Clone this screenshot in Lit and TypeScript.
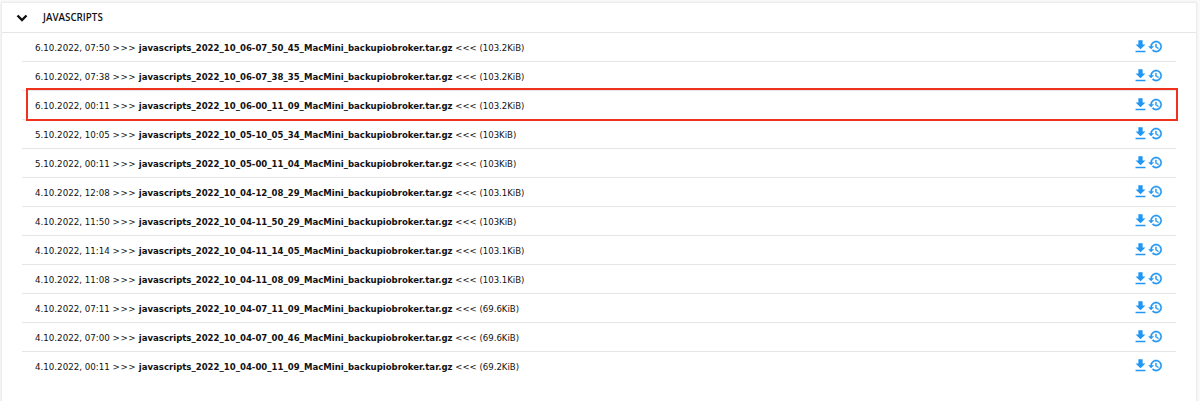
import { LitElement, html, css, svg } from "lit";
import { customElement } from "lit/decorators.js";

const rows: [string, string, string, boolean?][] = [
  ["6.10.2022, 07:50", "javascripts_2022_10_06-07_50_45_MacMini_backupiobroker.tar.gz", "103.2KiB"],
  ["6.10.2022, 07:38", "javascripts_2022_10_06-07_38_35_MacMini_backupiobroker.tar.gz", "103.2KiB"],
  ["6.10.2022, 00:11", "javascripts_2022_10_06-00_11_09_MacMini_backupiobroker.tar.gz", "103.2KiB", true],
  ["5.10.2022, 10:05", "javascripts_2022_10_05-10_05_34_MacMini_backupiobroker.tar.gz", "103KiB"],
  ["5.10.2022, 00:11", "javascripts_2022_10_05-00_11_04_MacMini_backupiobroker.tar.gz", "103KiB"],
  ["4.10.2022, 12:08", "javascripts_2022_10_04-12_08_29_MacMini_backupiobroker.tar.gz", "103.1KiB"],
  ["4.10.2022, 11:50", "javascripts_2022_10_04-11_50_29_MacMini_backupiobroker.tar.gz", "103KiB"],
  ["4.10.2022, 11:14", "javascripts_2022_10_04-11_14_05_MacMini_backupiobroker.tar.gz", "103.1KiB"],
  ["4.10.2022, 11:08", "javascripts_2022_10_04-11_08_09_MacMini_backupiobroker.tar.gz", "103.1KiB"],
  ["4.10.2022, 07:11", "javascripts_2022_10_04-07_11_09_MacMini_backupiobroker.tar.gz", "69.6KiB"],
  ["4.10.2022, 07:00", "javascripts_2022_10_04-07_00_46_MacMini_backupiobroker.tar.gz", "69.6KiB"],
  ["4.10.2022, 00:11", "javascripts_2022_10_04-00_11_09_MacMini_backupiobroker.tar.gz", "69.2KiB"],
];

const download = svg`<path d="M19 9h-4V3H9v6H5l7 7 7-7zM5 18v2h14v-2H5z"/>`;
const history = svg`<path d="M13 3c-4.970 0-9 4.030-9 9H1l3.890 3.890.070.140L9 12H6c0-3.870 3.130-7 7-7s7 3.130 7 7-3.130 7-7 7c-1.930 0-3.680-.790-4.940-2.060l-1.420 1.420C8.270 19.990 10.510 21 13 21c4.970 0 9-4.030 9-9s-4.030-9-9-9zm-1 5v5l4.280 2.540.720-1.210-3.500-2.080V8H12z"/>`;

@customElement("app-root")
export class AppRoot extends LitElement {
  static styles = css`
    :host {
      display: block;
      height: 401px;
      overflow: hidden;
      background: #fafafa;
      font-family: "DejaVu Sans", sans-serif;
      color: #111;
    }
    .card {
      margin: 3px 4px 0 2px;
      height: 398px;
      background: #fff;
      box-shadow: 0 0 2px 1px #e6e6e6;
    }
    .head {
      display: flex;
      align-items: center;
      height: 29px;
      padding-left: 13px;
      gap: 14px;
      border-bottom: 1px solid #e6e6e6;
      font-family: "Open Sans", sans-serif;
      font-size: 9.8px;
      font-weight: 600;
    }
    .chev { width: 14px; height: 14px; fill: none; stroke: #111; stroke-width: 2.4; }
    .list { margin: 0 20px; }
    .row {
      position: relative;
      display: flex;
      align-items: center;
      justify-content: space-between;
      padding: 1px 13px 0 13px;
      height: 27px;
      border-bottom: 1px solid #e6e6e6;
      font-size: 8.7px;
      white-space: pre;
    }
    .row:last-child { border-bottom: 0; }
    b { font-weight: 700; font-size: 8.55px; }
    .arrows { letter-spacing: 0.55px; }
    .tail { font-size: 8.55px; }
    .icons { display: flex; align-items: center; margin-top: -2px; }
    .icons svg { fill: #2196f3; display: block; }
    .dl { width: 17px; height: 17px; }
    .hist { width: 15px; height: 15px; margin-left: -0.5px; stroke: #2196f3; stroke-width: 0.7; }
    .mark {
      position: absolute;
      left: 4px;
      right: -2px;
      top: -3px;
      bottom: -2px;
      border: 2px solid #f0311c;
      pointer-events: none;
    }
  `;

  render() {
    return html`<div class="card">
      <div class="head">
        <svg class="chev" viewBox="0 0 14 14"><path d="M2.500 4.500 7 9l4.500-4.500"/></svg>
        <span>JAVASCRIPTS</span>
      </div>
      <div class="list">
        ${rows.map(
          ([d, f, s, m]) => html`<div class="row">
            <span>${d} <span class="arrows">&gt;&gt;&gt;</span> <b>${f}</b> <span class="tail">&lt;&lt;&lt; (${s})</span></span>
            <span class="icons">
              <svg class="dl" viewBox="0 0 24 24">${download}</svg>
              <svg class="hist" viewBox="0 0 24 24">${history}</svg>
            </span>
            ${m ? html`<div class="mark"></div>` : ""}
          </div>`
        )}
      </div>
    </div>`;
  }
}
